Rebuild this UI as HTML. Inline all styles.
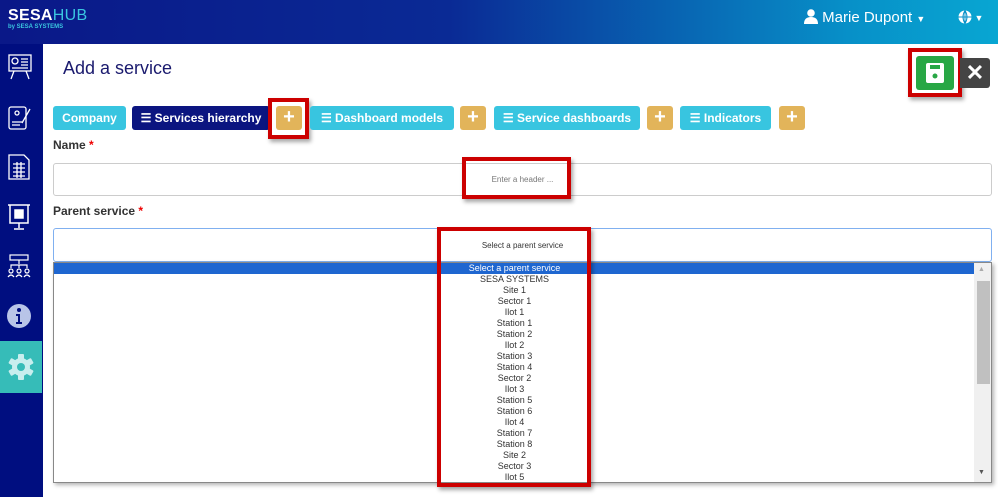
<!DOCTYPE html>
<html><head><meta charset="utf-8"><style>
*{box-sizing:border-box;margin:0;padding:0}
body{width:998px;height:497px;overflow:hidden;font-family:"Liberation Sans",sans-serif;background:#fff;position:relative}
.hdr{position:absolute;left:0;top:0;width:998px;height:44px;background:linear-gradient(90deg,#0a1888 0%,#0a2a95 45%,#0790c8 85%,#08a6d2 100%)}
.side{position:absolute;left:0;top:44px;width:43px;height:453px;background:#000e80}
.ab{position:absolute}
.tab{position:absolute;top:106px;height:24px;border-radius:3px;color:#fff;font-weight:bold;font-size:12px;line-height:24px;text-align:center}
.cy{background:#38c5e0}.nv{background:#0b1580}.pl{background:#e2b45a;font-size:20px;font-weight:bold;line-height:23px}
.red{position:absolute;border:4px solid #c00;box-shadow:2px 3px 4px rgba(0,0,0,.35)}
.lbl{position:absolute;left:53px;font-size:12px;font-weight:bold;color:#333}
.lbl b{color:#e00}
.li{font-size:9px;line-height:11px;text-align:center;color:#333;width:921px}
</style></head><body>
<div class="hdr"></div>
<div class="ab" style="left:8px;top:7px;color:#fff;font-size:16px;font-weight:bold;letter-spacing:.3px">SESA<span style="color:#3ac6e0;font-weight:normal">HUB</span></div>
<div class="ab" style="left:8px;top:24px;color:#3ac6e0;font-size:6px;font-weight:bold">by SESA SYSTEMS</div>
<div class="ab" style="left:804px;top:9px;color:#fff;font-size:15px">
<svg width="14" height="15" viewBox="0 0 14 15" style="vertical-align:-2px"><circle cx="7" cy="4" r="3.8" fill="#fff"/><path d="M0 15 Q0 8 7 8 Q14 8 14 15Z" fill="#fff"/></svg> Marie Dupont <span style="font-size:9px">▼</span></div>
<div class="ab" style="left:958px;top:10px;color:#fff;font-size:9px"><svg width="14" height="14" viewBox="0 0 14 14" style="vertical-align:-3px"><circle cx="7" cy="7" r="6.5" fill="#fff"/><path d="M7 .5V13.5M.5 7H13.5M7 .5Q3 7 7 13.5M7 .5Q11 7 7 13.5" stroke="#0790c8" stroke-width="1" fill="none"/></svg> ▼</div>
<div class="side"></div>
<svg class="ab" style="left:8px;top:54px" width="24" height="26" viewBox="0 0 24 26" fill="none" stroke="#fff" stroke-width="1.3"><rect x="1" y="1" width="22" height="16"/><circle cx="7" cy="7" r="3"/><path d="M13 5h7M13 8h7M13 11h7M4 14h16M6 17l-3 8M18 17l3 8"/></svg>
<svg class="ab" style="left:8px;top:106px" width="24" height="26" viewBox="0 0 24 26" fill="none" stroke="#fff" stroke-width="1.3"><rect x="1" y="1" width="17" height="22" rx="2"/><circle cx="9" cy="7" r="2"/><path d="M4 16h10M4 19h8M22 3l-8 14"/></svg>
<svg class="ab" style="left:8px;top:154px" width="22" height="26" viewBox="0 0 22 26" fill="none" stroke="#fff" stroke-width="1.3"><path d="M1 1h15l5 5v19H1z"/><path d="M5 10h12M5 14h12M5 18h12M5 22h12M9 8v16M13 8v16"/></svg>
<svg class="ab" style="left:7px;top:204px" width="24" height="26" viewBox="0 0 24 26" fill="none" stroke="#fff" stroke-width="1.5"><path d="M1 1h22M3 1v18h18V1M12 19v5M7 25h10"/><rect x="8" y="6" width="8" height="8" fill="#fff"/></svg>
<svg class="ab" style="left:6px;top:254px" width="26" height="24" viewBox="0 0 26 24" fill="none" stroke="#fff" stroke-width="1.2"><rect x="4" y="1" width="18" height="5"/><path d="M13 6v4M5 14v-3h16v3M13 11v3"/><circle cx="5" cy="17" r="2"/><circle cx="13" cy="17" r="2"/><circle cx="21" cy="17" r="2"/><path d="M2 23q3-4 6 0M10 23q3-4 6 0M18 23q3-4 6 0"/></svg>
<svg class="ab" style="left:7px;top:304px" width="24" height="24" viewBox="0 0 24 24"><circle cx="12" cy="12" r="12" fill="#b8c4e8"/><circle cx="12" cy="6" r="2" fill="#000e80"/><path d="M9 10h4v8h2v2H9v-2h2v-6H9z" fill="#000e80"/></svg>
<div class="ab" style="left:0;top:341px;width:42px;height:52px;background:#36bcb8"></div>
<svg class="ab" style="left:7px;top:353px" width="28" height="28" viewBox="0 0 28 28"><g fill="#c8eeee"><circle cx="14" cy="14" r="9"/><g><rect x="11" y="1" width="6" height="26" rx="1"/><rect x="11" y="1" width="6" height="26" rx="1" transform="rotate(60 14 14)"/><rect x="11" y="1" width="6" height="26" rx="1" transform="rotate(120 14 14)"/></g></g><circle cx="14" cy="14" r="4" fill="#36bcb8"/></svg>

<div class="ab" style="left:63px;top:58px;font-size:18px;color:#1a1a6e">Add a service</div>
<div class="ab" style="left:916px;top:56px;width:38px;height:34px;background:#28a745;border-radius:3px"></div>
<svg class="ab" style="left:925px;top:62px" width="20" height="22" viewBox="0 0 20 22"><rect x="1" y="1" width="18" height="20" rx="2" fill="#fff"/><rect x="5" y="3" width="10" height="4" fill="#28a745"/><circle cx="10" cy="14" r="2.5" fill="#28a745"/></svg>
<div class="red" style="left:908px;top:48px;width:54px;height:49px"></div>
<div class="ab" style="left:960px;top:58px;width:30px;height:30px;background:#444;border-radius:0 3px 3px 0;color:#fff;font-size:22px;font-weight:bold;text-align:center;line-height:30px">✕</div>

<div class="tab cy" style="left:53px;width:73px">Company</div>
<div class="tab nv" style="left:132px;width:138px">☰ Services hierarchy</div>
<div class="tab pl" style="left:276px;width:26px">+</div>
<div class="red" style="left:268px;top:98px;width:41px;height:41px"></div>
<div class="tab cy" style="left:310px;width:144px">☰ Dashboard models</div>
<div class="tab pl" style="left:460px;width:26px">+</div>
<div class="tab cy" style="left:494px;width:146px">☰ Service dashboards</div>
<div class="tab pl" style="left:647px;width:26px">+</div>
<div class="tab cy" style="left:680px;width:91px">☰ Indicators</div>
<div class="tab pl" style="left:779px;width:26px">+</div>

<div class="lbl" style="top:138px">Name <b>*</b></div>
<div class="ab" style="left:53px;top:163px;width:939px;height:33px;border:1px solid #ccc;border-radius:3px;font-size:8px;color:#777;text-align:center;line-height:32px">Enter a header ...</div>
<div class="red" style="left:462px;top:157px;width:109px;height:42px"></div>
<div class="lbl" style="top:204px">Parent service <b>*</b></div>
<div class="ab" style="left:53px;top:228px;width:939px;height:34px;border:1px solid #80b0f0;border-radius:3px;font-size:8px;color:#333;text-align:center;line-height:33px">Select a parent service</div>
<div class="ab" style="left:53px;top:262px;width:939px;height:221px;border:1px solid #888;box-shadow:2px 2px 4px rgba(0,0,0,.3);overflow:hidden;background:#fff">
<div class="li" style="background:#1e66d0;color:#fff;height:11px">Select a parent service</div>
<div class="li">SESA SYSTEMS</div><div class="li">Site 1</div><div class="li">Sector 1</div><div class="li">Ilot 1</div><div class="li">Station 1</div><div class="li">Station 2</div><div class="li">Ilot 2</div><div class="li">Station 3</div><div class="li">Station 4</div><div class="li">Sector 2</div><div class="li">Ilot 3</div><div class="li">Station 5</div><div class="li">Station 6</div><div class="li">Ilot 4</div><div class="li">Station 7</div><div class="li">Station 8</div><div class="li">Site 2</div><div class="li">Sector 3</div><div class="li">Ilot 5</div>
<div class="ab" style="left:920px;top:0;width:17px;height:219px;background:#f0f0f0"></div>
<div class="ab" style="left:923px;top:18px;width:13px;height:103px;background:#c0c0c0"></div>
<div class="ab" style="left:924px;top:3px;font-size:7px;color:#aaa">▲</div>
<div class="ab" style="left:924px;top:206px;font-size:7px;color:#555">▼</div>
</div>
<div class="red" style="left:437px;top:227px;width:154px;height:260px"></div>
</body></html>
